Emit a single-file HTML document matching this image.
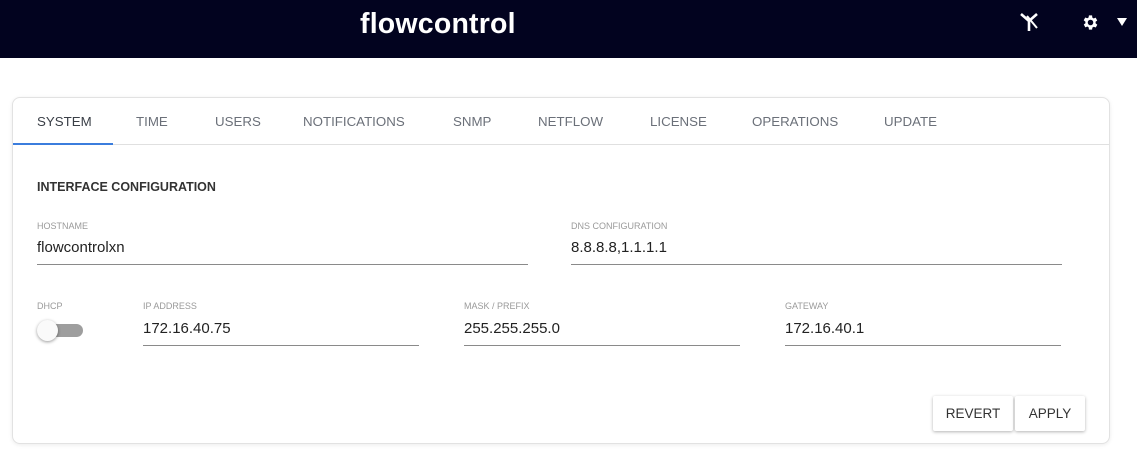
<!DOCTYPE html>
<html><head><meta charset="utf-8"><style>
*{margin:0;padding:0;box-sizing:border-box}
body{width:1137px;height:456px;background:#fff;font-family:"Liberation Sans",sans-serif;position:relative;overflow:hidden}
.nav{position:absolute;left:0;top:0;width:1137px;height:58px;background:#02031f}
.logo{position:absolute;left:360px;top:8px;color:#fff;font-size:28.5px;font-weight:bold;letter-spacing:0.2px}
.card{position:absolute;left:12px;top:97px;width:1098px;height:347px;border:1px solid #e2e2e2;border-radius:8px;box-shadow:0 1px 4px rgba(0,0,0,.08);background:#fff}
.tabs{position:absolute;left:0;top:0;width:100%;height:47px;border-bottom:1px solid #e0e0e0}
.tab{position:absolute;top:16px;font-size:13.3px;color:#6b7079}
.act{color:#3a3f47}
.ul{position:absolute;left:0;top:45px;width:100px;height:2px;background:#3b7ddd}
.lbl{position:absolute;font-size:9px;color:#9a9a9a}
.val{position:absolute;font-size:15px;color:#222}
.line{position:absolute;height:1px;background:#8a8a8a}
.h{position:absolute;left:24px;top:82px;font-size:12.5px;font-weight:bold;color:#333}
.btn{position:absolute;top:298px;height:35px;background:#fff;box-shadow:0 1px 3px rgba(0,0,0,.3);border-radius:2px;font-size:13.5px;color:#333;text-align:center;line-height:35px}
</style></head><body>
<div class="nav">
<div class="logo">flowcontrol</div>
<svg style="position:absolute;left:1018px;top:11px" width="22" height="22" viewBox="0 0 22 22"><path d="M3 3 L11 10 L19 3 M11 10 V20" stroke="#fff" stroke-width="2.6" fill="none"/><path d="M9 5 L19 17" stroke="#fff" stroke-width="2"/></svg>
<svg style="position:absolute;left:1081px;top:13px" width="19" height="19" viewBox="0 0 24 24"><path fill="#fff" d="M19.4 13a7.5 7.5 0 0 0 0-2l2.1-1.6-2-3.5-2.5 1a7 7 0 0 0-1.7-1L15 3h-4l-.4 2.7a7 7 0 0 0-1.7 1l-2.5-1-2 3.5L6.6 11a7.5 7.5 0 0 0 0 2l-2.1 1.6 2 3.5 2.5-1a7 7 0 0 0 1.7 1L11 21h4l.4-2.7a7 7 0 0 0 1.7-1l2.5 1 2-3.5zM13 15.5a3.5 3.5 0 1 1 0-7 3.5 3.5 0 0 1 0 7z" transform="translate(-1 0)"/></svg>
<div style="position:absolute;left:1117px;top:18px;width:0;height:0;border-left:5px solid transparent;border-right:5px solid transparent;border-top:8px solid #fff"></div>
</div>
<div class="card">
<div class="tabs">
<div class="tab act" style="left:24px">SYSTEM</div>
<div class="tab" style="left:123px">TIME</div>
<div class="tab" style="left:202px">USERS</div>
<div class="tab" style="left:290px">NOTIFICATIONS</div>
<div class="tab" style="left:440px">SNMP</div>
<div class="tab" style="left:525px">NETFLOW</div>
<div class="tab" style="left:637px">LICENSE</div>
<div class="tab" style="left:739px">OPERATIONS</div>
<div class="tab" style="left:871px">UPDATE</div>
<div class="ul"></div>
</div>
<div class="h">INTERFACE CONFIGURATION</div>
<div class="lbl" style="left:24px;top:123px">HOSTNAME</div>
<div class="val" style="left:24px;top:141px">flowcontrolxn</div>
<div class="line" style="left:24px;top:166px;width:491px"></div>
<div class="lbl" style="left:558px;top:123px">DNS CONFIGURATION</div>
<div class="val" style="left:558px;top:141px">8.8.8.8,1.1.1.1</div>
<div class="line" style="left:558px;top:166px;width:491px"></div>
<div class="lbl" style="left:24px;top:203px">DHCP</div>
<div style="position:absolute;left:26px;top:226px;width:44px;height:13px;border-radius:7px;background:#9e9e9e"></div>
<div style="position:absolute;left:24px;top:222px;width:21px;height:21px;border-radius:50%;background:#fafafa;box-shadow:0 1px 3px rgba(0,0,0,.4)"></div>
<div class="lbl" style="left:130px;top:203px">IP ADDRESS</div>
<div class="val" style="left:130px;top:222px">172.16.40.75</div>
<div class="line" style="left:130px;top:247px;width:276px"></div>
<div class="lbl" style="left:451px;top:203px">MASK / PREFIX</div>
<div class="val" style="left:451px;top:222px">255.255.255.0</div>
<div class="line" style="left:451px;top:247px;width:276px"></div>
<div class="lbl" style="left:772px;top:203px">GATEWAY</div>
<div class="val" style="left:772px;top:222px">172.16.40.1</div>
<div class="line" style="left:772px;top:247px;width:276px"></div>
<div class="btn" style="left:920px;width:80px">REVERT</div>
<div class="btn" style="left:1002px;width:70px">APPLY</div>
</div>
</body></html>
